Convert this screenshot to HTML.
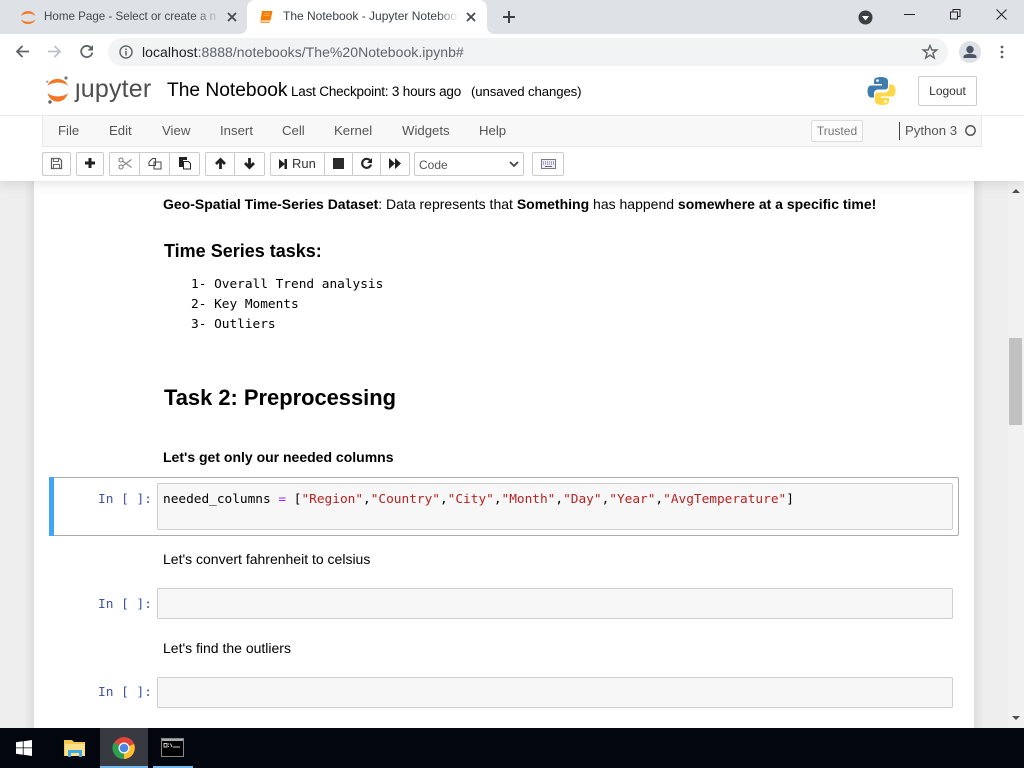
<!DOCTYPE html>
<html><head><meta charset="utf-8"><title>The Notebook</title>
<style>
html,body{margin:0;padding:0;width:1024px;height:768px;overflow:hidden;background:#eee;font-family:"Liberation Sans",sans-serif;color:#000}
.a{position:absolute;white-space:nowrap}
.t{position:absolute;white-space:nowrap;line-height:18px;font-size:13px}
.btn{position:absolute;top:152px;height:22px;background:#fff;border:1px solid #ccc;border-radius:2px;box-sizing:content-box}
.sep{position:absolute;top:153px;width:1px;height:22px;background:#ccc}
.menu{position:absolute;top:122px;font-size:13.2px;line-height:18px;color:#555}
.code{font-family:"DejaVu Sans Mono",monospace;font-size:12.8px;line-height:18px;letter-spacing:-.012px}
.in{position:absolute;font-family:"DejaVu Sans Mono",monospace;font-size:12.8px;line-height:18px;color:#3f51a8;left:98px;white-space:pre}
.box{position:absolute;background:#f7f7f7;border:1px solid #cfcfcf;border-radius:2px;box-sizing:border-box}
svg{position:absolute;overflow:visible}
</style></head><body>

<!-- page -->
<div class="a" style="left:0;top:181px;width:1008px;height:547px;background:#eee"></div>
<div class="a" style="left:24px;top:181px;width:10px;height:547px;background:linear-gradient(90deg,#eee,#dedede)"></div>
<div class="a" style="left:974px;top:181px;width:10px;height:547px;background:linear-gradient(90deg,#dedede,#eee)"></div>
<div class="a" style="left:34px;top:181px;width:940px;height:547px;background:#fff"></div>

<!-- scrollbar -->
<div class="a" style="left:1008px;top:181px;width:16px;height:547px;background:#f1f1f1"></div>
<div class="a" style="left:1009px;top:338px;width:13px;height:87px;background:#c1c1c1"></div>
<svg style="left:1008px;top:181px" width="16" height="547"><path d="M4 12L8 8L12 12Z" fill="#505050"/><path d="M4 535H12L8 539Z" fill="#505050"/></svg>

<!-- notebook content -->
<div class="t" style="left:163px;top:195px;font-size:14px"><b>Geo-Spatial Time-Series Dataset</b>: Data represents that <b>Something</b> has happend <b>somewhere at a specific time!</b></div>
<div class="t" style="left:164px;top:240px;font-size:18px;line-height:22px;font-weight:bold">Time Series tasks:</div>
<div class="a code" style="left:191px;top:275px;color:#000;line-height:20px;white-space:pre">1- Overall Trend analysis
2- Key Moments
3- Outliers</div>
<div class="t" style="left:164px;top:384px;font-size:21.9px;line-height:28px;font-weight:bold">Task 2: Preprocessing</div>
<div class="t" style="left:163px;top:448px;font-size:14px"><b>Let's get only our needed columns</b></div>

<div class="a" style="left:49px;top:477px;width:910px;height:59px;box-sizing:border-box;border:1px solid #ababab;border-left:0;border-radius:2px;background:#fff"></div>
<div class="a" style="left:49px;top:477px;width:5px;height:59px;background:#42a5f5"></div>
<div class="in" style="top:491px">In [ ]:</div>
<div class="box" style="left:157px;top:483px;width:796px;height:47px"></div>
<div class="a code" style="left:163px;top:491px;white-space:pre">needed_columns <span style="color:#a2f">=</span> [<span style="color:#ba2121">"Region"</span>,<span style="color:#ba2121">"Country"</span>,<span style="color:#ba2121">"City"</span>,<span style="color:#ba2121">"Month"</span>,<span style="color:#ba2121">"Day"</span>,<span style="color:#ba2121">"Year"</span>,<span style="color:#ba2121">"AvgTemperature"</span>]</div>

<div class="t" style="left:163px;top:550px;font-size:14px">Let's convert fahrenheit to celsius</div>
<div class="in" style="top:596px">In [ ]:</div>
<div class="box" style="left:157px;top:588px;width:796px;height:31px"></div>

<div class="t" style="left:163px;top:639px;font-size:14px">Let's find the outliers</div>
<div class="in" style="top:684px">In [ ]:</div>
<div class="box" style="left:157px;top:677px;width:796px;height:31px"></div>

<!-- jupyter header -->
<div class="a" style="left:0;top:65px;width:1024px;height:116px;background:#fff;box-shadow:0 0 12px 1px rgba(87,87,87,.2)"></div>

<!-- Logo -->
<svg style="left:46px;top:76px" width="26" height="30" viewBox="0 0 26 30">
<path d="M1.500 10C4 .5 19 .5 22 10C18 5.500 6 5.500 1.500 10Z" fill="#f37726"/>
<path d="M1.500 17C6 21.500 18 21.500 22 17C19 28.500 4 28.500 1.500 17Z" fill="#f37726"/>
<circle cx="20" cy="2" r="1.600" fill="#767677"/><circle cx="1.300" cy="5.700" r="1.200" fill="#9e9e9e"/><circle cx="4" cy="26" r="1.700" fill="#616262"/>
</svg>
<div class="a" style="left:75px;top:74px;font-size:25px;line-height:30px;color:#4e4e4e;letter-spacing:.2px">&#x237;upyter</div>
<div class="a" style="left:167px;top:77px;font-size:19.2px;line-height:27px;color:#000">The Notebook</div>
<div class="a" style="left:291px;top:83px;font-size:13.5px;line-height:18px;letter-spacing:-.2px">Last Checkpoint: 3 hours ago</div>
<div class="a" style="left:471px;top:83px;font-size:13.2px;line-height:18px;letter-spacing:-.1px">(unsaved changes)</div>

<!-- python logo -->
<svg style="left:867px;top:76px" width="29" height="30" viewBox="0 0 29 30">
<path d="M14 1C8 1 7 3 7 5V8H15V9.500H4C1.500 9.500 0.500 12 0.500 15.500C0.500 19 2 21.500 4 21.500H7V17.500C7 15 9 13.500 11 13.500H18C20 13.500 21 12 21 10.500V5C21 3 19 1 14 1Z" fill="#3f7cae"/>
<path d="M15 29C21 29 22 27 22 25V22H14V20.500H25C27.500 20.500 28.500 18 28.500 14.500C28.500 11 27 8.500 25 8.500H22V12.500C22 15 20 16.500 18 16.500H11C9 16.500 8 18 8 19.500V25C8 27 10 29 15 29Z" fill="#ffd848"/>
<circle cx="10.500" cy="4.500" r="1.300" fill="#fff"/><circle cx="18.500" cy="25.500" r="1.300" fill="#fff"/>
</svg>
<div class="a" style="left:918px;top:76px;width:59px;height:30px;box-sizing:border-box;border:1px solid #ccc;border-radius:2px;background:#fff;font-size:12px;line-height:28px;text-align:center;color:#333">Logout</div>

<!-- menubar -->
<div class="a" style="left:42px;top:115px;width:940px;height:32px;box-sizing:border-box;background:#f8f8f8;border:1px solid #e7e7e7;border-radius:2px"></div>
<div class="a" style="left:0;top:115px;width:42px;height:1px;background:#e7e7e7"></div>
<div class="a" style="left:982px;top:115px;width:42px;height:1px;background:#e7e7e7"></div>
<div class="menu" style="left:58px">File</div>
<div class="menu" style="left:109px">Edit</div>
<div class="menu" style="left:162px">View</div>
<div class="menu" style="left:220px">Insert</div>
<div class="menu" style="left:282px">Cell</div>
<div class="menu" style="left:334px">Kernel</div>
<div class="menu" style="left:402px">Widgets</div>
<div class="menu" style="left:479px">Help</div>
<div class="a" style="left:811px;top:120px;width:52px;height:22px;box-sizing:border-box;border:1px solid #ddd;border-radius:2px;background:#fcfcfc;font-size:12px;line-height:20px;text-align:center;color:#777">Trusted</div>
<div class="a" style="left:899px;top:122px;width:1px;height:18px;background:#444"></div>
<div class="menu" style="left:905px">Python 3</div>
<svg style="left:965px;top:125px" width="12" height="12"><circle cx="5.500" cy="5.500" r="4.700" fill="none" stroke="#555" stroke-width="1.500"/></svg>

<!-- toolbar -->
<div class="btn" style="left:42px;width:27px"></div>
<svg style="left:50px;top:157px" width="13" height="13" viewBox="0 0 13 13"><path d="M1.500 1.500H9.500L11.500 3.500V11.500H1.500Z" fill="none" stroke="#555" stroke-width="1.200"/><path d="M3.500 1.500H8.500V4.500H3.500ZM3.500 7.500H9.500V11.500H3.500Z" fill="none" stroke="#666"/></svg>
<div class="btn" style="left:76px;width:26px"></div>
<svg style="left:84px;top:157px" width="12" height="12" viewBox="0 0 12 12"><path d="M6 1V11M1 6H11" stroke="#222" stroke-width="3"/></svg>
<div class="btn" style="left:109px;width:89px"></div>
<div class="sep" style="left:139px"></div><div class="sep" style="left:169px"></div>
<svg style="left:118px;top:157px" width="15" height="13" viewBox="0 0 15 13"><circle cx="3" cy="3" r="2" fill="none" stroke="#777"/><circle cx="3" cy="10" r="2" fill="none" stroke="#777"/><path d="M4.500 4L13.500 10.500M4.500 9L13.500 2.500" stroke="#888" stroke-width="1.200"/></svg>
<svg style="left:148px;top:157px" width="14" height="13" viewBox="0 0 14 13"><path d="M1 5L4.500 1.500H7.500V8.500H1ZM6 5H13V12H6Z" fill="#fff" stroke="#444"/></svg>
<svg style="left:178px;top:156px" width="14" height="14" viewBox="0 0 14 14"><path d="M1 1H9V4H5V11H1Z" fill="#222"/><path d="M5.500 5.500H10.500L12.500 7.500V13H5.500Z" fill="#fff" stroke="#222"/></svg>
<div class="btn" style="left:205px;width:58px"></div>
<div class="sep" style="left:234px"></div>
<svg style="left:214px;top:157px" width="13" height="13" viewBox="0 0 13 13"><path d="M6.500 12V2.500M2 7L6.500 2.500L11 7" fill="none" stroke="#222" stroke-width="2.800"/></svg>
<svg style="left:243px;top:157px" width="13" height="13" viewBox="0 0 13 13"><path d="M6.500 1V10.500M2 6L6.500 10.500L11 6" fill="none" stroke="#222" stroke-width="2.800"/></svg>
<div class="btn" style="left:270px;width:138px"></div>
<div class="sep" style="left:324px"></div><div class="sep" style="left:352px"></div><div class="sep" style="left:380px"></div>
<svg style="left:279px;top:159px" width="9" height="10" viewBox="0 0 9 10"><path d="M0 0L6 5L0 10ZM5.500 0H8V10H5.500Z" fill="#222"/></svg>
<div class="a" style="left:292px;top:155px;font-size:13px;line-height:18px;color:#333">Run</div>
<div class="a" style="left:333px;top:158px;width:11px;height:11px;background:#2a2a2a"></div>
<svg style="left:360px;top:157px" width="13" height="13" viewBox="0 0 13 13"><path d="M10.500 4A4.500 4.500 0 1 0 11 7.500" fill="none" stroke="#222" stroke-width="2.100"/><path d="M12 1V6H7Z" fill="#222"/></svg>
<svg style="left:389px;top:158px" width="12" height="11" viewBox="0 0 12 11"><path d="M0 0L6 5.500L0 11ZM6 0L12 5.500L6 11Z" fill="#222"/></svg>
<div class="a" style="left:414px;top:152px;width:110px;height:24px;box-sizing:border-box;background:#fff;border:1px solid #ccc;border-radius:2px;font-size:12px;line-height:25px;padding-left:4px;color:#555">Code</div>
<svg style="left:509px;top:161px" width="10" height="7" viewBox="0 0 10 7"><path d="M1 1L5 5L9 1" fill="none" stroke="#444" stroke-width="1.800"/></svg>
<div class="btn" style="left:532px;width:30px"></div>
<svg style="left:541px;top:159px" width="15" height="10" viewBox="0 0 15 10"><rect x=".5" y=".5" width="14" height="9" fill="#eef" stroke="#778"/><path d="M2 3H13M2 5H13" stroke="#667" stroke-dasharray="1 1"/><path d="M4 7.500H11" stroke="#667"/></svg>

<!-- Chrome tabs -->
<div class="a" style="left:0;top:0;width:1024px;height:34px;background:#dee1e6"></div>
<div class="a" style="left:0;top:34px;width:1024px;height:31px;background:#fff"></div>
<div class="a" style="left:247px;top:0;width:240px;height:34px;background:#fff;border-radius:8px 8px 0 0"></div>
<svg style="left:239px;top:26px" width="8" height="8"><path d="M0 8C5 8 8 5 8 0V8Z" fill="#fff"/></svg>
<svg style="left:487px;top:26px" width="8" height="8"><path d="M8 8C3 8 0 5 0 0V8Z" fill="#fff"/></svg>
<svg style="left:20px;top:9px" width="17" height="17" viewBox="0 0 17 17"><path d="M1 7C3 .5 13 .5 15.500 7C12 3.800 5 3.800 1 7Z" fill="#f37726"/><path d="M1 10.500C5 13.700 12 13.700 15.500 10.500C13 16.500 3 16.500 1 10.500Z" fill="#f37726"/></svg>
<div class="a" style="left:44px;top:8px;width:177px;overflow:hidden;font-size:11.6px;line-height:17px;color:#45494e">Home Page - Select or create a n</div>
<div class="a" style="left:195px;top:8px;width:27px;height:17px;background:linear-gradient(90deg,rgba(222,225,230,0),#dee1e6)"></div>
<svg style="left:227px;top:12px" width="10" height="10"><path d="M1 1L9 9M9 1L1 9" stroke="#45494e" stroke-width="1.800"/></svg>
<svg style="left:259px;top:10px" width="14" height="14" viewBox="0 0 14 14"><path d="M3 1H13.500L11.500 10.500H1.500Z" fill="#f57c00"/><path d="M1.500 10.500C1 12 1.500 13 3 13H10.500L11 11.500H3" fill="#f9a03f"/><path d="M5 3.500H11M4.500 5.500H10.500" stroke="#fbb469" stroke-width=".8"/></svg>
<div class="a" style="left:283px;top:8px;width:176px;overflow:hidden;font-size:12px;line-height:17px;color:#3c4043">The Notebook - Jupyter Noteboo</div>
<div class="a" style="left:437px;top:8px;width:22px;height:17px;background:linear-gradient(90deg,rgba(255,255,255,0),#fff)"></div>
<svg style="left:466px;top:12px" width="10" height="10"><path d="M1 1L9 9M9 1L1 9" stroke="#45494e" stroke-width="1.800"/></svg>
<svg style="left:503px;top:11px" width="12" height="12"><path d="M6 0V12M0 6H12" stroke="#3c4043" stroke-width="2"/></svg>
<svg style="left:858px;top:10px" width="15" height="15"><circle cx="7.500" cy="7.500" r="7" fill="#3c4043"/><path d="M4 6H11L7.500 10.500Z" fill="#fff"/></svg>
<div class="a" style="left:904px;top:14px;width:11px;height:1px;background:#222"></div>
<svg style="left:950px;top:9px" width="11" height="11"><path d="M.5 3H7.500V10H.5ZM3 3V.5H10V7.500H7.500" fill="none" stroke="#222"/></svg>
<svg style="left:996px;top:9px" width="11" height="11"><path d="M.5 .5L10.500 10.500M10.500 .5L.5 10.500" stroke="#222"/></svg>

<!-- address bar -->
<div class="a" style="left:108px;top:38px;width:840px;height:28px;background:#f1f3f4;border-radius:14px"></div>
<svg style="left:15px;top:44px" width="15" height="15" viewBox="0 0 15 15"><path d="M14 7.500H2.500M7.500 2L2 7.500L7.500 13" fill="none" stroke="#5f6368" stroke-width="1.800"/></svg>
<svg style="left:47px;top:44px" width="15" height="15" viewBox="0 0 15 15"><path d="M1 7.500H12.500M7.500 2L13 7.500L7.500 13" fill="none" stroke="#bdc1c6" stroke-width="1.800"/></svg>
<svg style="left:79px;top:44px" width="15" height="15" viewBox="0 0 15 15"><path d="M12.500 4.500A5.600 5.600 0 1 0 13.300 8.500" fill="none" stroke="#5f6368" stroke-width="1.800"/><path d="M14 1V6.500H8.500Z" fill="#5f6368"/></svg>
<svg style="left:119px;top:45px" width="14" height="14" viewBox="0 0 14 14"><circle cx="7" cy="7" r="6" fill="none" stroke="#5f6368" stroke-width="1.400"/><path d="M7 6V10.500M7 3.500V5" stroke="#5f6368" stroke-width="1.500"/></svg>
<div class="a" style="left:142px;top:43px;font-size:14px;letter-spacing:.04px;line-height:18px;color:#5f6368"><span style="color:#202124">localhost</span>:8888/notebooks/The%20Notebook.ipynb#</div>
<svg style="left:922px;top:44px" width="16" height="16" viewBox="0 0 16 16"><path d="M8 1.500L9.900 6H14.800L10.900 9.100L12.300 14L8 11.200L3.700 14L5.100 9.100L1.200 6H6.100Z" fill="none" stroke="#5f6368" stroke-width="1.400"/></svg>
<svg style="left:959px;top:41px" width="22" height="22" viewBox="0 0 22 22"><circle cx="11" cy="11" r="11" fill="#dee1e6"/><circle cx="11" cy="8.500" r="3.700" fill="#4a5568"/><path d="M4.500 17V15.500C4.500 12 17.500 12 17.500 15.500V17Z" fill="#4a5568"/></svg>
<svg style="left:1000px;top:45px" width="4" height="14"><circle cx="2" cy="2" r="1.400" fill="#5f6368"/><circle cx="2" cy="7" r="1.400" fill="#5f6368"/><circle cx="2" cy="12" r="1.400" fill="#5f6368"/></svg>

<!-- taskbar -->
<div class="a" style="left:0;top:728px;width:1024px;height:40px;background:#02060f"></div>
<div class="a" style="left:100px;top:728px;width:48px;height:40px;background:#383a41"></div>
<div class="a" style="left:100px;top:766px;width:48px;height:2px;background:#76b9ed"></div>
<div class="a" style="left:153px;top:766px;width:40px;height:2px;background:#76b9ed"></div>
<svg style="left:16px;top:740px" width="16" height="16" viewBox="0 0 16 16"><path d="M0 2.300L6.800 1.300V7.500H0ZM7.600 1.200L16 0V7.500H7.600ZM0 8.300H6.800V14.700L0 13.700ZM7.600 8.300H16V16L7.600 14.800Z" fill="#fff"/></svg>
<svg style="left:64px;top:739px" width="22" height="18" viewBox="0 0 22 18"><path d="M0 1H8L10 3H21V17H0Z" fill="#f5c84c"/><path d="M1 5H21V17H1Z" fill="#fce08a"/><path d="M4 18V11H18V18H15V14H7V18Z" fill="#3fa9e8"/></svg>
<svg style="left:112px;top:736px" width="24" height="24" viewBox="0 0 24 24"><circle cx="12" cy="12" r="11" fill="#e0443a"/><path d="M12 12L22 8A11 11 0 0 1 12 23Z" fill="#fbc02d"/><path d="M12 12L12 23A11 11 0 0 1 2 6.500Z" fill="#2e9e4f"/><circle cx="12" cy="12" r="5.500" fill="#fff"/><circle cx="12" cy="12" r="4.300" fill="#4a86e8"/></svg>
<svg style="left:161px;top:738px" width="23" height="19" viewBox="0 0 23 19"><rect x=".5" y=".5" width="22" height="18" fill="#000" stroke="#888"/><rect x="1" y="1" width="21" height="2" fill="#aaa"/><path d="M3 5.500H6V9H3ZM7.500 5.500V6.500M7.500 8V9M9.500 5.500L11 9M12 9H19" fill="none" stroke="#ccc"/></svg>

</body></html>
